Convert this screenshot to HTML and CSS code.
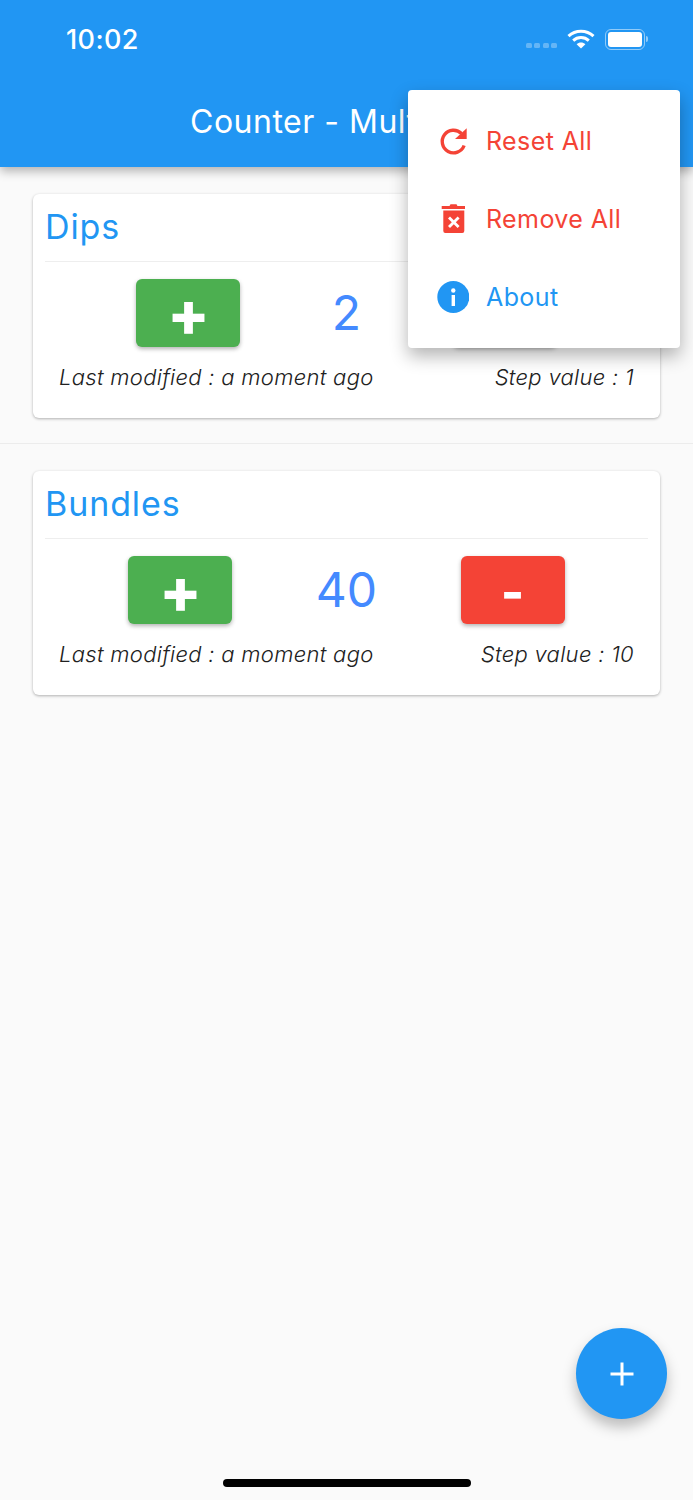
FILE: index.html
```html
<!DOCTYPE html>
<html lang="en">
<head>
    <meta charset="UTF-8">
    <meta name="viewport" content="width=device-width, initial-scale=1.0">
    <title>Counter - Multiple</title>
    <link rel="stylesheet" href="styles.css">
</head>
<body>
    <header class="app-bar">
        <div class="status-bar">
            <span class="clock">10:02</span>
            <div class="status-icons">
                <div class="signal"><i></i><i></i><i></i><i></i></div>
                <svg class="wifi" width="28" height="20" viewBox="0 0 28 20">
                    <path d="M1.500 7.200C8.500 .6 19.500 .6 26.500 7.200" fill="none" stroke="#fff" stroke-width="3"/>
                    <path d="M6.200 11.600C10.600 7.600 17.400 7.600 21.800 11.600" fill="none" stroke="#fff" stroke-width="3"/>
                    <path d="M9.600 15.200C12.200 12.900 15.800 12.900 18.400 15.200L14 19.600Z" fill="#fff"/>
                </svg>
                <div class="battery"><div class="battery-fill"></div></div>
                <div class="battery-cap"></div>
            </div>
        </div>
        <h1 class="app-title">Counter - Multiple</h1>
    </header>

    <main>
        <section class="list-item">
            <div class="card">
                <h2 class="card-title">Dips</h2>
                <div class="counter-row">
                    <button class="step-btn add">+</button>
                    <span class="count">2</span>
                    <button class="step-btn minus">-</button>
                </div>
                <div class="card-footer">
                    <span>Last modified : a moment ago</span>
                    <span>Step value : 1</span>
                </div>
            </div>
        </section>
        <section class="list-item">
            <div class="card">
                <h2 class="card-title">Bundles</h2>
                <div class="counter-row">
                    <button class="step-btn add">+</button>
                    <span class="count">40</span>
                    <button class="step-btn minus">-</button>
                </div>
                <div class="card-footer">
                    <span>Last modified : a moment ago</span>
                    <span>Step value : 10</span>
                </div>
            </div>
        </section>
    </main>

    <div class="popup-menu">
        <div class="menu-item danger">
            <svg width="32" height="32" viewBox="0 0 32 32">
                <path d="M27.100 20.500A11.300 11.300 0 1 1 24.500 8.500" fill="none" stroke="#f44336" stroke-width="3.400"/>
                <path d="M29.700 3.300V14H18Z" fill="#f44336"/>
            </svg>
            <span>Reset All</span>
        </div>
        <div class="menu-item danger">
            <svg width="32" height="32" viewBox="0 0 32 32">
                <path d="M4.700 3H12.500L13.500 1.200H19.500L20.500 3H28V6H4.700Z" fill="#f44336"/>
                <path fill-rule="evenodd" d="M6.300 7.500H27.300V28A2 2 0 0 1 25.300 30H8.300A2 2 0 0 1 6.300 28ZM13 13.600L11 15.600L14.800 19.300L11 23L13 25L16.800 21.300L20.600 25L22.600 23L18.800 19.300L22.600 15.600L20.600 13.600L16.800 17.300Z" fill="#f44336"/>
            </svg>
            <span>Remove All</span>
        </div>
        <div class="menu-item info">
            <svg width="32" height="32" viewBox="0 0 32 32">
                <circle cx="16.300" cy="16" r="16" fill="#2196f3"/>
                <circle cx="16.300" cy="9.500" r="2.200" fill="#fff"/>
                <rect x="14.600" y="14" width="3.400" height="11" fill="#fff"/>
            </svg>
            <span>About</span>
        </div>
    </div>

    <button class="fab">
        <svg width="24" height="24" viewBox="0 0 24 24">
            <path d="M12 0.500V23.500M0.500 12H23.500" stroke="#fff" stroke-width="3" fill="none"/>
        </svg>
    </button>

    <div class="home-indicator"></div>
</body>
</html>
```

FILE: styles.css
```css
html, body {
    height: 100%;
}

body {
    position: relative;
    height: 1500px;
    margin: 0;
    overflow: hidden;
    background-color: #fafafa;
    font-family: Inter, "Noto Sans", sans-serif;
}

.app-bar {
    height: 167px;
    background-color: #2196f3;
    box-shadow: 0 4px 10px rgba(0, 0, 0, 0.3);
    color: #fff;
    position: relative;
}

.status-bar {
    display: flex;
    justify-content: space-between;
    align-items: center;
    height: 78px;
    padding: 0 45px 0 66px;
}

.clock {
    font-size: 27px;
    font-weight: 500;
    letter-spacing: 0.4px;
}

.status-icons {
    display: flex;
    align-items: center;
}

.signal {
    display: flex;
    gap: 2.500px;
    margin: 13px 10px 0 0;
}

.signal i {
    width: 6px;
    height: 5px;
    border-radius: 1.500px;
    background-color: rgba(255, 255, 255, 0.3);
}

.wifi {
    margin: 0 10px 0 0;
}

.battery {
    box-sizing: border-box;
    width: 40px;
    height: 21px;
    padding: 2px;
    border: 1.500px solid rgba(255, 255, 255, 0.5);
    border-radius: 6px;
}

.battery-fill {
    height: 100%;
    border-radius: 3px;
    background-color: #fff;
}

.battery-cap {
    width: 2px;
    height: 6px;
    margin-left: 1px;
    border-radius: 0 2px 2px 0;
    background-color: rgba(255, 255, 255, 0.5);
}

.app-title {
    margin: 22px 0 0;
    padding-left: 190px;
    font-size: 32px;
    font-weight: 400;
    letter-spacing: 0.5px;
    line-height: 44px;
}

.list-item {
    box-sizing: border-box;
    height: 277px;
    padding: 27px 33px 0;
    border-bottom: 1px solid #ececec;
}

.list-item:last-child {
    border-bottom: none;
}

.card {
    box-sizing: border-box;
    height: 224px;
    padding: 0 12px;
    border-radius: 6px;
    background-color: #fff;
    box-shadow: 0 1px 3px rgba(0, 0, 0, 0.3);
}

.card-title {
    margin: 0 0 17px;
    padding: 11px 1px 12px 0;
    border-bottom: 1px solid #eeeeee;
    color: #2196f3;
    font-size: 34px;
    font-weight: 400;
    letter-spacing: 0.9px;
    line-height: 44px;
}

.counter-row {
    display: flex;
    justify-content: space-evenly;
    align-items: center;
}

.step-btn {
    width: 104px;
    height: 68px;
    padding: 0;
    border: none;
    border-radius: 6px;
    box-shadow: 0 2px 4px rgba(0, 0, 0, 0.3);
    color: #fff;
    font-family: inherit;
    font-weight: 800;
}

.add {
    padding-top: 1px;
    background-color: #4caf50;
    font-size: 62px;
    line-height: 63px;
}

.minus {
    padding-top: 4px;
    background-color: #f44336;
    font-size: 50px;
    line-height: 64px;
}

.count {
    color: #448aff;
    font-size: 48px;
    line-height: 68px;
}

.card-footer {
    display: flex;
    justify-content: space-between;
    margin-top: 15px;
    padding: 0 14px;
    color: #212121;
    font-size: 22px;
    font-style: italic;
    font-weight: 350;
    letter-spacing: 0.3px;
    line-height: 30px;
}

.popup-menu {
    position: absolute;
    top: 90px;
    left: 408px;
    box-sizing: border-box;
    width: 272px;
    height: 258px;
    padding: 12px 29px;
    border-radius: 4px;
    background-color: #fff;
    box-shadow: 0 8px 18px rgba(0, 0, 0, 0.3);
}

.menu-item {
    display: flex;
    align-items: center;
    gap: 17px;
    height: 78px;
    font-size: 25px;
    letter-spacing: 0.4px;
}

.danger {
    color: #f44336;
}

.info {
    color: #2196f3;
}

.fab {
    position: absolute;
    top: 1328px;
    left: 576px;
    display: flex;
    justify-content: center;
    align-items: center;
    width: 91px;
    height: 91px;
    padding: 0;
    border: none;
    border-radius: 50%;
    background-color: #2196f3;
    box-shadow: 0 8px 14px rgba(0, 0, 0, 0.25);
}

.home-indicator {
    position: absolute;
    top: 1479px;
    left: 223px;
    width: 248px;
    height: 8px;
    border-radius: 4px;
    background-color: #000;
}
```
